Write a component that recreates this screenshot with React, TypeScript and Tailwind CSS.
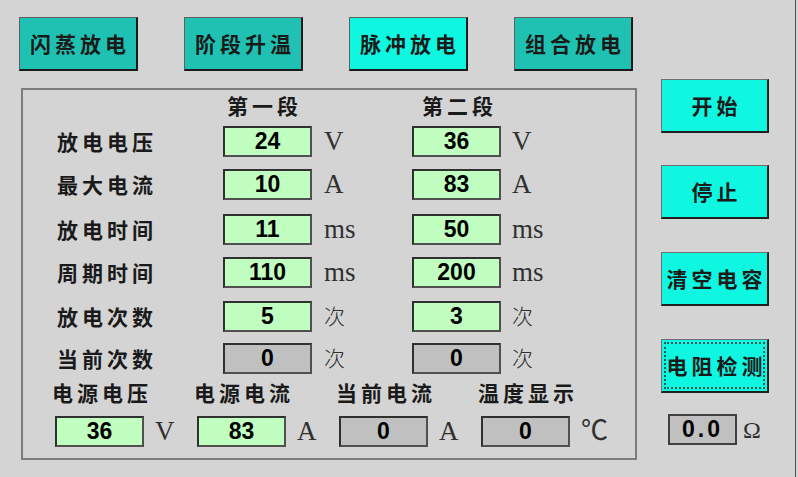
const cjk = { fontFamily: '"Noto Sans CJK SC", "Noto Sans", sans-serif' };
const num = { fontFamily: '"Liberation Sans", Arial, sans-serif' };
const serif = { fontFamily: '"Liberation Serif", "Noto Sans CJK SC", serif' };

const tabs = [
  { label: "闪蒸放电", active: false },
  { label: "阶段升温", active: false },
  { label: "脉冲放电", active: true },
  { label: "组合放电", active: false },
];

type Row = { label: string; a: string; b: string; unit: string; mt: string; gray?: boolean };

const rows: Row[] = [
  { label: "放电电压", a: "24", b: "36", unit: "V", mt: "mt-[7px]" },
  { label: "最大电流", a: "10", b: "83", unit: "A", mt: "mt-[12px]" },
  { label: "放电时间", a: "11", b: "50", unit: "ms", mt: "mt-[14px]" },
  { label: "周期时间", a: "110", b: "200", unit: "ms", mt: "mt-[12px]" },
  { label: "放电次数", a: "5", b: "3", unit: "次", mt: "mt-[13px]" },
  { label: "当前次数", a: "0", b: "0", unit: "次", mt: "mt-[11px]", gray: true },
];

const bottom = [
  { label: "电源电压", value: "36", unit: "V", gray: false },
  { label: "电源电流", value: "83", unit: "A", gray: false },
  { label: "当前电流", value: "0", unit: "A", gray: true },
  { label: "温度显示", value: "0", unit: "℃", gray: true },
];

function Field({ value, gray }: { value: string; gray?: boolean }) {
  return (
    <div
      className={`flex h-[31px] w-[89px] items-center justify-center border-2 border-t-[#303030] border-l-[#303030] border-b-[#505050] border-r-[#505050] text-[23px] font-bold leading-none text-black ${
        gray ? "bg-[#c0c0c0]" : "bg-[#c0ffc0]"
      }`}
      style={num}
    >
      {value}
    </div>
  );
}

function Unit({ unit }: { unit: string }) {
  if (unit === "次") {
    return (
      <span className="text-[21px] font-light leading-none text-[#303030]" style={cjk}>
        次
      </span>
    );
  }
  return (
    <span className="text-[27px] leading-none text-[#303030]" style={serif}>
      {unit}
    </span>
  );
}

function SideButton({ label, focus }: { label: string; focus?: boolean }) {
  return (
    <button
      className="flex h-[54px] w-[108px] items-center justify-center border border-t-[#707070] border-l-[#707070] border-b-2 border-r-2 border-b-[#202020] border-r-[#202020] bg-[#0ff7e0] p-[2px] text-[21px] font-bold text-[#1a1a1a]"
      style={cjk}
    >
      <span
        className={`flex h-full w-full items-center justify-center whitespace-nowrap tracking-[4px] ${
          focus ? "border-2 border-dotted border-[#2c5c58]" : ""
        }`}
      >
        <span className="-mr-[4px]">{label}</span>
      </span>
    </button>
  );
}

export default function App() {
  return (
    <div className="flex h-[477px] w-[798px] bg-[#d4d4d4]" style={cjk}>
      <div className="flex h-full w-[796px] border-r border-[#505050]">
        {/* 左侧：模式 + 参数 */}
        <div className="w-[642px] pl-[19px] pt-[17px]">
          <div className="flex gap-[46px]">
            {tabs.map((t) => (
              <button
                key={t.label}
                className={`flex h-[54px] w-[119px] items-center justify-center whitespace-nowrap border border-t-[#606060] border-l-[#606060] border-b-2 border-r-2 border-b-[#1a1a1a] border-r-[#1a1a1a] pl-[4px] text-[21px] font-bold tracking-[4px] text-[#1a1a1a] ${
                  t.active ? "bg-[#0ff7e0]" : "bg-[#1fc2b2]"
                }`}
              >
                {t.label}
              </button>
            ))}
          </div>

          <div className="ml-[2px] mt-[17px] h-[372px] w-[616px] border-2 border-[#7c7c7c] pl-[34px] pt-[2px]">
            {/* 段标题 */}
            <div className="flex h-[27px] items-center text-[21px] font-bold tracking-[4px] text-[#1a1a1a]">
              <div className="w-[166px]" />
              <div className="w-[89px] pr-[6px] text-center">第一段</div>
              <div className="w-[100px]" />
              <div className="w-[89px] pl-[6px] text-center">第二段</div>
            </div>

            {rows.map((r) => (
              <div key={r.label} className={`flex h-[31px] items-center ${r.mt}`}>
                <div className="w-[166px] text-[21px] font-bold tracking-[4px] text-[#1a1a1a]">{r.label}</div>
                <Field value={r.a} gray={r.gray} />
                <div className="w-[100px] pl-[12px]">
                  <Unit unit={r.unit} />
                </div>
                <Field value={r.b} gray={r.gray} />
                <div className="pl-[11px]">
                  <Unit unit={r.unit} />
                </div>
              </div>
            ))}

            {/* 电源 / 温度 */}
            <div className="-ml-[5px] mt-[5px] flex">
              {bottom.map((b) => (
                <div key={b.label} className="w-[142px]">
                  <div className="h-[26px] text-[21px] font-bold leading-[26px] tracking-[4px] text-[#1a1a1a]">{b.label}</div>
                  <div className="ml-[3px] mt-[11px] flex items-center">
                    <Field value={b.value} gray={b.gray} />
                    <div className="pl-[11px]">
                      <Unit unit={b.unit} />
                    </div>
                  </div>
                </div>
              ))}
            </div>
          </div>
        </div>

        {/* 右侧：操作 */}
        <div className="flex flex-col pl-[19px] pt-[79px]">
          <SideButton label="开始" />
          <div className="mt-[32px]">
            <SideButton label="停止" />
          </div>
          <div className="mt-[33px]">
            <SideButton label="清空电容" />
          </div>
          <div className="mt-[33px]">
            <SideButton label="电阻检测" focus />
          </div>
          <div className="ml-[7px] mt-[21px] flex items-center gap-[6px]">
            <div
              className="flex h-[31px] w-[69px] items-center justify-center border-2 border-[#404040] bg-[#c0c0c0] text-[23px] font-bold leading-none tracking-[3px] text-black"
              style={num}
            >
              0.0
            </div>
            <span className="text-[24px] leading-none text-[#303030]" style={serif}>
              Ω
            </span>
          </div>
        </div>
      </div>
    </div>
  );
}
